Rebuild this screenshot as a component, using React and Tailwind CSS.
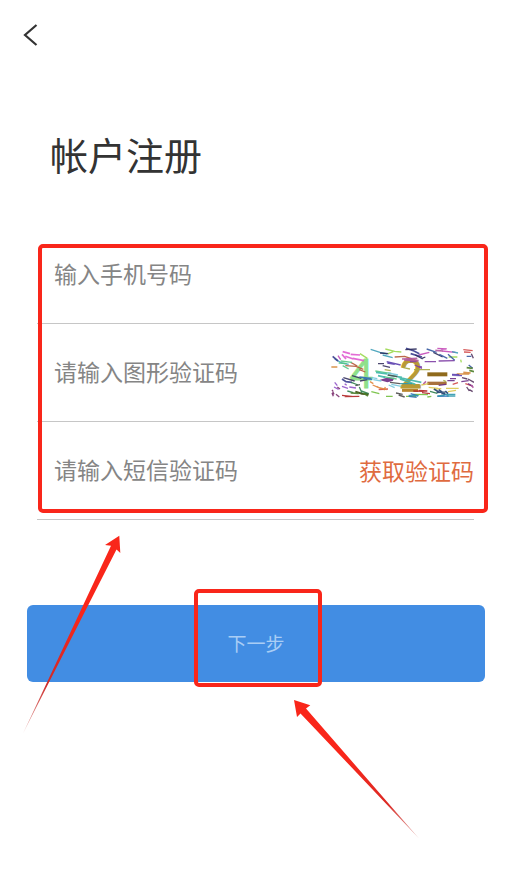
import React from 'react';
import clsx from 'clsx';

// short scratches over the captcha: colour, width, path
const noise = [
  ['#e05bd0', 5, 'M68 50l22 6M76 64l24 8M98 70l34 7M92 58l28 2M66 58l12 14'],
  ['#c44ab8', 4, 'M62 74l-8 -12M352 40l28 2M366 48l40 4M296 60l32 -8M362 44l18 -3'],
  ['#3f9fb8', 4, 'M152 43l28 9l22 5M188 60l30 8M44 72l22 12l20 4M396 50l18 4'],
  ['#3b3f8f', 5, 'M38 64l16 14M258 40l24 8l16 8M272 56l34 10M66 132l12 8l18 2'],
  ['#2b2b5c', 4, 'M180 54l26 2M256 44l34 -2M286 60l22 12M306 70l10 -4M340 52l28 14'],
  ['#9bd84e', 4, 'M120 56l22 14M196 42l28 7l20 2M204 56l16 -6M386 66l26 0M422 74l2 8'],
  ['#b55a38', 4, 'M76 92l32 2l22 9M118 104l18 7M224 66l30 -2l22 8M92 82l20 11'],
  ['#d68a3c', 5, 'M34 96l18 0M410 117l38 0M430 112l22 2'],
  ['#55c985', 4, 'M62 78l34 4M68 92l18 10M166 108l26 4l22 3M190 125l40 7M56 84l24 2'],
  ['#3db6a8', 5, 'M168 112l34 5M202 120l44 7M236 127l34 8l34 7M174 122l22 5M240 132l46 16'],
  ['#5b3fae', 4, 'M200 80l42 10M202 84l22 4M396 118l22 1M396 121l30 1'],
  ['#39345f', 4, 'M174 86l18 0M188 92l22 5M70 128l34 10M96 122l28 8M120 138l22 -4'],
  ['#7e3ea5', 4, 'M270 80l20 0M314 80l34 0M356 78l48 -1M284 90l22 10M292 94l14 2'],
  ['#3659a0', 4, 'M320 42l30 10M358 58l24 12M384 58l20 18M440 64l14 0M446 90l12 10'],
  ['#a8a840', 4, 'M250 98l20 4M282 104l48 0M194 104l18 3M370 136l8 4'],
  ['#d14747', 4, 'M430 44l28 3M432 51l20 1M398 148l16 -5M436 146l18 6M176 164l28 -2'],
  ['#6a2d87', 4, 'M424 140l22 -3M444 146l14 8M382 137l22 0M390 131l18 0M356 151l22 -3'],
  ['#2f7f4c', 4, 'M94 142l20 8M124 168l22 8M82 168l18 5M330 169l22 6M118 156l8 18'],
  ['#4e7e2a', 5, 'M92 174l24 1M130 174l14 9M448 106l14 4M440 98l18 2'],
  ['#9254c9', 4, 'M66 154l18 6M42 156l14 7M74 146l6 5M88 156l20 3M44 142l8 10'],
  ['#7b2f6d', 4, 'M38 170l4 8M48 178l10 8M52 156l8 6M40 184l-4 -10M36 165l4 5'],
  ['#b02323', 4, 'M66 181l32 4M74 185l44 -1M280 168l30 1M306 173l24 3M296 166l26 2'],
  ['#e08438', 4, 'M158 150l18 8M178 158l22 6M196 156l-4 10M150 140l10 6M170 154l14 8'],
  ['#72bf3e', 4, 'M154 170l24 6M198 184l20 0M258 184l30 0M280 178l44 1M322 186l12 -2'],
  ['#326bb8', 4, 'M118 126l36 4M130 131l26 2M266 184l24 3M272 176l22 7M352 184l34 -1'],
  ['#2e98ad', 4, 'M370 178l36 0M352 183l22 -2M380 183l26 0M266 181l30 1M240 146l36 0'],
  ['#dcc64c', 4, 'M378 160l38 0M384 170l24 -4M326 157l28 3M340 162l24 -1M304 150l22 -4'],
  ['#1f3f6e', 5, 'M342 162l16 10M356 164l14 10M350 172l26 -1M364 176l12 0M376 168l8 8'],
  ['#57355f', 4, 'M440 156l8 12M448 164l10 6M426 128l16 4M444 132l18 10M454 56l6 14'],
  ['#b1559e', 5, 'M246 72l46 -2M252 75l44 2M310 147l8 -8M454 150l6 8M346 46l22 2'],
  ['#74c7dc', 4, 'M160 134l24 4M204 114l30 6M214 148l30 6M156 128l16 3M206 150l18 8'],
  ['#4e4e4e', 4, 'M204 120l28 5M210 142l30 4M228 174l20 4M236 180l18 6M106 152l14 -3'],
];

function CaptchaImage() {
  return (
    <svg
      viewBox="33 37 429 151"
      className="w-[143px] h-[51px] shrink-0"
      role="img"
      aria-label="图形验证码"
    >
      <g fontFamily="Lato, sans-serif" fontSize="120" strokeWidth="3">
        <text x="90" y="158" fill="#8fe08a" stroke="#8fe08a">4</text>
        <text x="238" y="158" fill="#b89a35" stroke="#b89a35">2</text>
      </g>
      <path d="M322 118h60" stroke="#8f6a1c" strokeWidth="12" />
      <path d="M322 145h58" stroke="#a8713d" strokeWidth="10" />
      <path d="M246 166h48" stroke="#b8862e" strokeWidth="9" />
      <path d="M178 135l22 -7h24l-6 10l-16 4z" fill="#7c3f8f" />
      <path d="M106 170l20 6l20 2" stroke="#4a5a20" strokeWidth="6" fill="none" />
      {noise.map(([color, width, d]) => (
        <path key={color} d={d} stroke={color} strokeWidth={width} fill="none" opacity="0.9" />
      ))}
    </svg>
  );
}

function Field({ id, label, type = 'text', children }) {
  return (
    <div className="h-[98px] flex items-center border-b border-[#c6c6c6]">
      <input
        id={id}
        type={type}
        aria-label={label}
        placeholder={label}
        className="flex-1 min-w-0 h-12 pl-[17px] pb-1 bg-transparent outline-none text-[23px] text-[#333] placeholder:text-[#858585]"
      />
      {children}
    </div>
  );
}

function Highlight({ className }) {
  return (
    <div
      className={clsx('absolute border-4 border-[#f9261a] rounded-[5px] pointer-events-none', className)}
    />
  );
}

export default function App() {
  return (
    <main className="relative min-h-screen bg-white font-['Noto_Sans_CJK_SC',sans-serif] font-normal">
      <header className="h-[70px] pl-5 flex items-center">
        <button type="button" aria-label="返回" className="w-6 h-8 flex items-center">
          <svg viewBox="0 0 24 32" className="w-6 h-8" fill="none" stroke="#333" strokeWidth="2.2">
            <path d="M16.500 6L5 16L16.500 26" />
          </svg>
        </button>
      </header>

      <h1 className="pt-14 pl-[50px] text-[38px] leading-[56px] text-[#333]">帐户注册</h1>

      <form onSubmit={(e) => e.preventDefault()}>
        <div className="relative mt-11 ml-[37px] mr-[41px]">
          <Field id="phone" label="输入手机号码" type="tel" />
          <Field id="captcha" label="请输入图形验证码">
            <CaptchaImage />
          </Field>
          <Field id="sms" label="请输入短信验证码">
            <button type="button" className="text-[23px] text-[#df6b3f]">获取验证码</button>
          </Field>
          <Highlight className="left-px -right-[14px] top-[18px] h-[269px]" />
        </div>

        <div className="relative mt-[85px] ml-[27px] mr-[30px]">
          <button
            type="submit"
            className="w-full h-[77px] rounded-md bg-[#428de3] text-[19px] text-[#a9cdf5]"
          >
            下一步
          </button>
          <Highlight className="left-[167px] -top-4 w-32 h-[98px]" />
        </div>
      </form>

      <svg
        viewBox="0 0 100 200"
        className="absolute left-[22px] top-[535px] w-[100px] h-[200px] pointer-events-none"
        aria-hidden="true"
      >
        <defs>
          <linearGradient id="fadeUp" x1="0" y1="1" x2="0" y2="0">
            <stop offset="0" stopColor="#c23a35" stopOpacity="0.4" />
            <stop offset="0.25" stopColor="#cf2a28" />
            <stop offset="0.6" stopColor="#f9261a" />
          </linearGradient>
        </defs>
        <path d="M97.300 0.700L83 10L89 10.700L1 198.500L94.500 14.500L98.300 18Z" fill="url(#fadeUp)" />
      </svg>
      <svg
        viewBox="0 0 128 142"
        className="absolute left-[292px] top-[698px] w-32 h-[142px] pointer-events-none"
        aria-hidden="true"
      >
        <defs>
          <linearGradient id="fadeDown" x1="1" y1="1" x2="0" y2="0">
            <stop offset="0" stopColor="#c23a35" stopOpacity="0.4" />
            <stop offset="0.25" stopColor="#dc2a24" />
            <stop offset="0.6" stopColor="#f9261a" />
          </linearGradient>
        </defs>
        <path d="M2 2L18.300 7.300L14 10.500L127 140.500L8.500 15.500L5 19Z" fill="url(#fadeDown)" />
      </svg>
    </main>
  );
}
